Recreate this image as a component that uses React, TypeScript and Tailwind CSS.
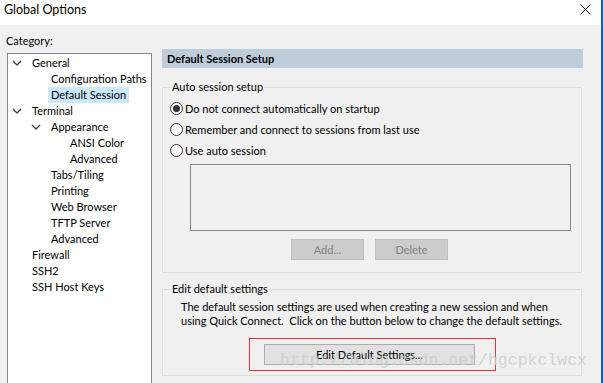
import React from 'react';

type Node = { label: string; level: number; open?: boolean; selected?: boolean };

const tree: Node[] = [
  { label: 'General', level: 0, open: true },
  { label: 'Configuration Paths', level: 1 },
  { label: 'Default Session', level: 1, selected: true },
  { label: 'Terminal', level: 0, open: true },
  { label: 'Appearance', level: 1, open: true },
  { label: 'ANSI Color', level: 2 },
  { label: 'Advanced', level: 2 },
  { label: 'Tabs/Tiling', level: 1 },
  { label: 'Printing', level: 1 },
  { label: 'Web Browser', level: 1 },
  { label: 'TFTP Server', level: 1 },
  { label: 'Advanced', level: 1 },
  { label: 'Firewall', level: 0 },
  { label: 'SSH2', level: 0 },
  { label: 'SSH Host Keys', level: 0 },
];

const indent = ['pl-[21px]', 'pl-[40px]', 'pl-[59px]'];

function Chevron() {
  return (
    <svg width="10" height="6" viewBox="0 0 10 6" className="absolute -left-[17px] top-[5px]">
      <path d="M1 1 L5 5 L9 1" fill="none" stroke="#404040" strokeWidth="1.3" />
    </svg>
  );
}

function Radio({ checked, label }: { checked?: boolean; label: string }) {
  return (
    <div className="flex h-[21px] items-center">
      <span className="flex h-[13px] w-[13px] items-center justify-center rounded-full border border-[#333333] bg-white">
        {checked && <span className="h-[7px] w-[7px] rounded-full bg-[#333333]" />}
      </span>
      <span className="ml-[2px]">{label}</span>
    </div>
  );
}

export default function App() {
  return (
    <div
      className="relative h-[383px] w-[603px] overflow-hidden whitespace-nowrap bg-[#f0f0f0] text-[11px] leading-[16px] text-black"
      style={{ fontFamily: 'Lato, "Noto Sans", sans-serif' }}
    >
      {/* title bar */}
      <div className="flex h-[25px] items-start justify-between bg-white pl-[4px] pr-[12px] pt-[2px]">
        <span className="text-[12.5px]">Global Options</span>
        <svg width="11" height="11" viewBox="0 0 11 11" className="mt-[2px]">
          <path d="M0.5 0.5 L10.5 10.5 M10.5 0.5 L0.5 10.5" stroke="#111" strokeWidth="1" />
        </svg>
      </div>

      <div className="flex">
        {/* category column */}
        <div className="w-[162px] shrink-0 pl-[6px] pt-[8px]">
          <div className="h-[20px]">Category:</div>
          <div className="ml-[1px] h-[340px] w-[145px] border border-[#828790] bg-white pt-[1px]">
            {tree.map((n, i) => (
              <div key={i} className={`flex h-[16px] items-center ${indent[n.level]}`}>
                <span className={`relative px-[3px] ${n.selected ? 'bg-[#cce8ff]' : ''}`}>
                  {n.open && <Chevron />}
                  {n.label}
                </span>
              </div>
            ))}
          </div>
        </div>

        {/* settings column */}
        <div className="w-[421px] shrink-0 pt-[24px]">
          <div className="flex h-[19px] items-center bg-[#bfcddb] pl-[5px] font-bold">
            Default Session Setup
          </div>

          <fieldset className="mt-[11px] h-[194px] w-[420px] border border-[#dcdcdc] pl-[7px]">
            <legend className="ml-[1px] px-[1px]">Auto session setup</legend>
            <div className="mt-[3px]">
              <Radio checked label="Do not connect automatically on startup" />
              <Radio label="Remember and connect to sessions from last use" />
              <Radio label="Use auto session" />
            </div>
            <div className="ml-[20px] mt-[3px] h-[67px] w-[381px] border border-[#828790]" />
            <div className="mt-[8px] flex gap-[11px] pl-[121px]">
              <div className="flex h-[21px] w-[73px] items-center justify-center border border-[#bfbfbf] bg-[#cccccc] text-[#838383]">
                Add...
              </div>
              <div className="flex h-[21px] w-[73px] items-center justify-center border border-[#bfbfbf] bg-[#cccccc] text-[#838383]">
                Delete
              </div>
            </div>
          </fieldset>

          <fieldset className="mt-[8px] h-[95px] w-[420px] border border-[#dcdcdc] pl-[18px]">
            <legend className="-ml-[10px] px-[1px]">Edit default settings</legend>
            <p className="mt-[3px] leading-[14px]">
              The default session settings are used when creating a new session and when
              <br />
              using Quick Connect.&nbsp; Click on the button below to change the default settings.
            </p>
            <div className="mt-[16px] pl-[83px]">
              <div className="flex h-[21px] w-[211px] items-center justify-center border border-[#adadad] bg-[#e1e1e1]">
                Edit Default Settings...
              </div>
            </div>
          </fieldset>
        </div>
      </div>

      {/* window edge */}
      <div className="absolute right-0 top-0 h-full w-[2px] bg-[#1f5f9f]" />

      {/* annotation + watermark overlay */}
      <div className="pointer-events-none absolute left-[249px] top-[338px] h-[33px] w-[247px] border border-[#ee3333]" />
      <div
        className="pointer-events-none absolute left-[280px] top-[351px] text-[16.5px] leading-[20px] text-[#cccccc] opacity-80"
        style={{ fontFamily: '"Liberation Mono", monospace' }}
      >
        http://blog.csdn.net/hgcpkclwcx
      </div>
    </div>
  );
}
